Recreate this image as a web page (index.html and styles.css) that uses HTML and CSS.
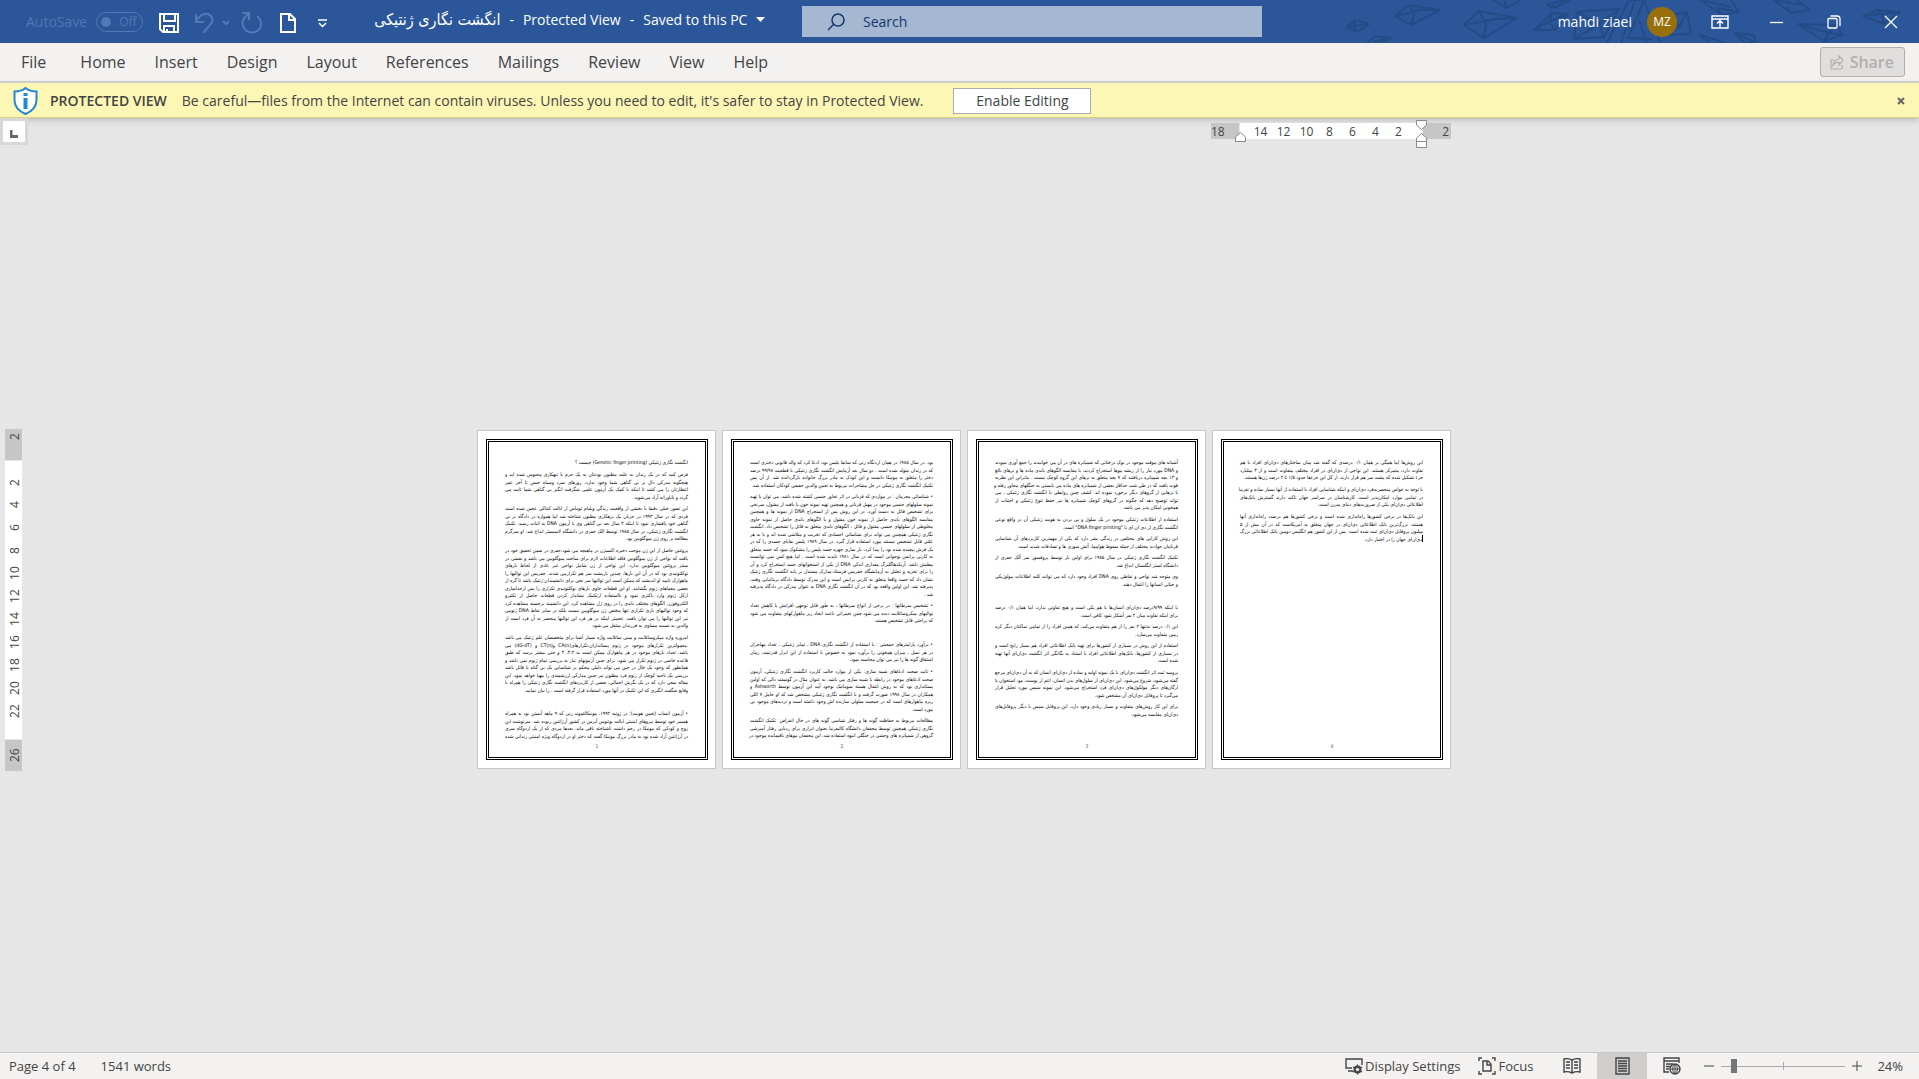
FILE: index.html
```html
<!DOCTYPE html>
<html lang="en">
<head>
<meta charset="utf-8">
<title>انگشت نگاری ژنتیکی - Protected View</title>
<link rel="stylesheet" href="styles.css">
</head>
<body>
<header class="titlebar">
  <svg class="titlebar-art" width="580" height="43" viewBox="0 0 580 43" aria-hidden="true">
    <g fill="none" stroke="#244b86" stroke-width="2" stroke-linejoin="round">
      <path d="M8 27l8-7 14 4-12 8zM8 27l22-3M16 20l-1 6 3 6"/>
      <path d="M56 16l14-11 31 5-29 15zM56 16l25-6 20 0M70 5l5 8-3 12"/>
      <path d="M28 43l8-7 16 2-10 5M34 42l18-4"/>
      <path d="M125 25l15-14 38 7-33 20zM125 25l32-6 21-1M140 11l7 13-2 14"/>
      <path d="M154 0l14 8 14-8M165 0l3 8M207 5l8 3 16-8M207 5l20-5M215 8l-2-5"/>
      <path d="M195 30l18-17 16 1-13 16zM195 30l16-9 18-7M213 13l-3 9 6 8"/>
      <path d="M235 39l3-27 42-3-15 28zM238 12l22 12 20-15M260 24l-25 15M265 37l-5-13"/>
      <path d="M268 43l22-43 15 0 16 43M282 43l14-43M305 0l-16 38 24 1M300 20l8 23"/>
      <path d="M322 35l10-20 16-3 4 22zM332 15l8 12-18 8M348 12l-8 15"/>
      <path d="M361 0l22 15 17-3-8-12M361 0l31 7M383 15l-5-7 22 4M359 34l27 9M359 34l12 9"/>
      <path d="M396 33l10 10 11 0-2-8zM396 33l21 10M435 0l17 13 19-3-14-10M435 0l27 5M452 13l-4-7"/>
      <path d="M459 24l38 1 7 10-19 6zM459 24l31 9 14 2M497 25l-7 8-5 8"/>
      <path d="M524 16l14-6 23 2-16 12zM524 16l19-2 18-2M538 10l5 6 2 8"/>
    </g>
  </svg>
  <div class="title-left">
    <label class="autosave">AutoSave
      <span class="toggle"><input type="checkbox" disabled><span>Off</span></span>
    </label>
    <button class="qat save" aria-label="Save"><svg width="20" height="20" viewBox="0 0 20 20"><path d="M1 1h18v18H4l-3-3zM5 1v7h11V1M5 19v-6h10v6M8 19v-3" fill="none" stroke="#fff" stroke-width="2"/></svg></button>
    <button class="qat undo" aria-label="Undo" disabled><svg width="34" height="22" viewBox="0 0 34 22"><path d="M1 2v8h8M1 9c4-6 8-8 12-7 5 2 6 7 2 11l-7 8M28 9l3 3 3-3" fill="none" stroke="#5079b5" stroke-width="2"/></svg></button>
    <button class="qat redo" aria-label="Repeat" disabled><svg width="22" height="22" viewBox="0 0 22 22"><path d="M1 1h7v7M8 2C2 5 0 11 3 16c4 6 12 6 16 0 2-4 1-9-3-12" fill="none" stroke="#5079b5" stroke-width="2"/></svg></button>
    <button class="qat new" aria-label="New document"><svg width="16" height="20" viewBox="0 0 16 20"><path d="M1 1h9l5 5v13H1zM9 1v6h6" fill="none" stroke="#fff" stroke-width="2"/></svg></button>
    <button class="qat more" aria-label="Customize Quick Access Toolbar"><svg width="9" height="9" viewBox="0 0 9 9"><path d="M0 1h9M1 4l3.500 3.500L8 4" fill="none" stroke="#fff" stroke-width="1.500"/></svg></button>
    <button class="doc-title"><bdi class="fa">انگشت نگاری ژنتیکی</bdi><span>-</span><span>Protected View</span><span>-</span><span>Saved to this PC</span><svg width="9" height="5" viewBox="0 0 9 5"><path d="M0 0h9L4.500 5z" fill="#fff"/></svg></button>
  </div>
  <label class="search">
    <svg width="18" height="18" viewBox="0 0 18 18"><circle cx="11" cy="7" r="6" fill="none" stroke="#12376c" stroke-width="1.500"/><path d="M7 11l-6 6" stroke="#12376c" stroke-width="1.500"/></svg>
    <input type="text" placeholder="Search" aria-label="Search">
  </label>
  <div class="title-right">
    <button class="user">mahdi ziaei <span class="avatar">MZ</span></button>
    <button class="win" aria-label="Ribbon Display Options"><svg width="18" height="14" viewBox="0 0 18 14"><path d="M1 1h16v12H1zM1 4h16M9 12V6M6 8.500l3-3 3 3" fill="none" stroke="#fff" stroke-width="1.400"/></svg></button>
    <button class="win" aria-label="Minimize"><svg width="14" height="14" viewBox="0 0 14 14"><path d="M0 7.500h13" stroke="#fff" stroke-width="1.300"/></svg></button>
    <button class="win" aria-label="Restore"><svg width="14" height="14" viewBox="0 0 14 14"><path d="M1 4.500q0-1 1-1h7q1 0 1 1v7.500q0 1-1 1H2q-1 0-1-1zM3.500 1H10q3 0 3 3v7" fill="none" stroke="#fff" stroke-width="1.300"/></svg></button>
    <button class="win" aria-label="Close"><svg width="14" height="14" viewBox="0 0 14 14"><path d="M1 1l12 12M13 1L1 13" stroke="#fff" stroke-width="1.300"/></svg></button>
  </div>
</header>

<nav class="tabs">
  <button class="file">File</button><button>Home</button><button>Insert</button><button>Design</button><button>Layout</button><button>References</button><button>Mailings</button><button>Review</button><button>View</button><button>Help</button>
  <button class="share" disabled><svg width="14" height="15" viewBox="0 0 14 15"><path d="M4 5H1v9h11v-4M3 10c1-4 3-6 6-6V1l4 4-4 5V7C6 7 5 8 3 10z" fill="none" stroke="#b1afad" stroke-width="1.200"/></svg>Share</button>
</nav>

<section class="message">
  <svg width="25" height="28" viewBox="0 0 25 28"><path d="M12.500 1c3 2.500 7 3.500 11 3.500V13c0 6-4 11-11 14C5.500 24 1.500 19 1.500 13V4.500c4 0 8-1 11-3.500z" fill="#fff" stroke="#2488cf" stroke-width="2"/><path d="M12.500 6v3M12.500 11v11" stroke="#2488cf" stroke-width="4"/></svg>
  <strong>PROTECTED VIEW</strong>
  <span class="message-text">Be careful—files from the Internet can contain viruses. Unless you need to edit, it's safer to stay in Protected View.</span>
  <button class="enable">Enable Editing</button>
  <button class="dismiss" aria-label="Close message"><svg width="8" height="8" viewBox="0 0 8 8"><path d="M1 1l6 6M7 1L1 7" stroke="#666" stroke-width="2"/></svg></button>
</section>

<main class="workspace">
  <button class="tab-stop" aria-label="Tab selector"><svg width="8" height="8" viewBox="0 0 8 8"><path d="M1 0v6.500h7" fill="none" stroke="#666" stroke-width="3"/></svg></button>
  <div class="hruler-row">
    <div class="hruler">
      <div class="edge">18</div>
      <div class="scale"><span>14</span><span>12</span><span>10</span><span>8</span><span>6</span><span>4</span><span>2</span></div>
      <div class="edge end">2</div>
      <svg class="marker left" width="11" height="10" viewBox="0 0 11 10"><path d="M.5 9.500V5l5-4.500 5 4.500v4.500z" fill="#fff" stroke="#888"/></svg>
      <svg class="marker right" width="11" height="28" viewBox="0 0 11 28"><path d="M.5.5h10V5l-5 4.500L.5 5zM.5 21.500V18l5-4.500 5 4.500v3.500zM.5 21.500h10v6H.5z" fill="#fff" stroke="#888"/></svg>
    </div>
  </div>
  <div class="vruler">
    <div class="edge">2</div>
    <div class="scale"><span>2</span><span>4</span><span>6</span><span>8</span><span>10</span><span>12</span><span>14</span><span>16</span><span>18</span><span>20</span><span>22</span></div>
    <div class="edge end">26</div>
  </div>
  <div class="pages" lang="fa" dir="rtl">
    <article class="page"><div class="frame">
      <p><span>انگشت نگاری ژنتیکی (Genetic finger printing) چیست ؟</span></p>
      <p><span>فرض کنید که در یک زندان به علت مظنون بودنتان به یک جرم یا تبهکاری محبوس شده اید و</span><span>هیچگونه مدرکی دال بر بی گناهی شما وجود ندارد، روزهای سرد وسیاه حبس تا آخر عمر</span><span>انتظارتان را می کشد تا اینکه با کمک یک آزمون علمی شگرفت انگیز بی گناهی شما ثابت می</span><span>گردد و ناباورانه آزاد می‌شوید.</span></p>
      <p><span>این تصور خیلی دقیقا با بخشی از واقعیت زندگی ویلیام توماس از ایالت کنتاکی عجین شده است</span><span>فردی که در سال ۱۹۹۳ در جریان یک بزهکاری مظنون شناخته شد اما همواره در دادگاه بر بی</span><span>گناهی خود پافشاری نمود تا اینکه ۴ سال بعد بی گناهی وی با آزمون DNA به اثبات رسید. تکنیک</span><span>انگشت نگاری ژنتیکی، در سال ۱۹۸۵ توسط الک جفری در دانشگاه لاسیستر ابداع شد. او سرگرم</span><span>مطالعه بر روی ژن میوگلوبین بود.</span></p>
      <p><span>پروتئین حاصل از این ژن موجب ذخیره اکسیژن در ماهیچه می شود.جفری در ضمن تحقیق خود در</span><span>یافت که نواحی از ژن میوگلوبین فاقد اطلاعات لازم برای ساخت میوگلوبین می باشد و نقشی در</span><span>سنتز پروتئین میوگلوبین ندارد. این نواحی از ژن شامل نواحی غیر عادی از لحاظ بازهای</span><span>نوکلئوتیدی بود که در آن این بازها، چندین بارپشت سر هم تکرارمی شدند. جفریس این توالیها را</span><span>ماهوارک نامید او اندیشید که ممکن است این توالیها سر نخی برای دانشمندان ژنتیک باشد تا گره از</span><span>بعضی معماهای ژنوم بگشایند. او این قطعات حاوی بازهای نوکلئوتیدی تکراری را پس ازجداسازی</span><span>ازکل ژنوم وارد باکتری نمود و بااستفاده ازتکنیک نشاندار کردن قطعات حاصل از تکثیرو</span><span>الکتروفورز، الگوهای مختلف باندی را در روی ژل مشاهده کرد. این دانشمند برجسته مشاهده کرد</span><span>که وجود توالیهای بازی تکراری تنها مختص ژن میوگلوبین نیست بلکه در سایر نقاط DNA ژنومی</span><span>نیز این توالیها را می توان یافت. عجیبتر اینکه در هر فرد این توالیها منحصر به آن فرد است از</span><span>والدین به نسبت مساوی به فرزندان منتقل می شود.</span></p>
      <p><span>امروزه واژه میکروساتلایت و مینی ساتلایت واژه بسیار آشنا برای متخصصان علم ژنتیک می باشد</span><span>.معمولترین تکرارهای موجود در ژنوم پستانداران،تکرارهای(CA(n و(CT(n و (dG-dT) می</span><span>باشد. تعداد بازهای موجود در هر ماهوارک ممکن است به ۳،۲، ۴ و حتی بیشتر برسد که طبق</span><span>قاعده خاصی در ژنوم تکرار می شود. برای چنین آزمونهای نیاز به بررسی تمام ژنوم نمی باشد و</span><span>همانطور که وجود یک خال در جین می تواند دلیلی محکم بر شناسایی یک بی گناه یا قاتل باشد</span><span>بررسی یک ناحیه کوچک از ژنوم فرد مظنون نیز چنین مدارکی ارزشمندی را مهیا خواهد نمود. این</span><span>مقاله سعی دارد که در یک نگرش اجمالی، بعضی از کاربردهای انگشت نگاری ژنتیکی را همراه با</span><span>وقایع شگفت انگیزی که این تکنیک در آنها مورد استفاده قرار گرفته است ، را بیان نمایید.</span></p>
      <p><span></span></p>
      <p><span>• آزمون انساب (تعیین هویت): در ژوئیه ۱۹۹۲، مونیکالئموند زنی که ۹ ماهه آبستن بود به همراه</span><span>همسر خود توسط نیروهای امنیتی ایالت بوئنوس آیرس در کشور آرژانتین ربوده شد. سرنوشت این</span><span>زوج و کودکی که مونیکا در رحم داشت ناشناخته باقی ماند. بعدها مردی که از یک اردوگاه سری</span><span class="full">در آرژانتین آزاد شده بود به مادر بزرگ مونیکا گفت که دختر او در اردوگاه ویژه امنیتی زندانی شده</span></p>
      <footer>1</footer>
    </div></article>
    <article class="page"><div class="frame">
      <p><span>بود. در سال ۱۹۸۵ در همان اردنگاه زنی که سابقا پلیس بود، ادعا کرد که والد قانونی دختری است</span><span>که در زندان متولد شده است . دو سال بعد آزمایش انگشت نگاری ژنتیکی با قطعیت ۹۹/۹۸ درصد</span><span>دختر را متعلق به مونیکا دانست و این کودک به مادر بزرگ خانواده بازگردانده شد. از آن پس</span><span>تکنیک انگشت نگاری ژنتیکی در حل مشاجرات مربوط به تعیین والدین حقیقی کودکان استفاده شد.</span></p>
      <p><span>• شناسائی مجرمان : در مواردی که قربانی در اثر تجاوز جنسی کشته شده باشد، می توان با تهیه</span><span>نمونه سلولهای جنسی موجود در مهبل قربانی و همچنین تهیه نمونه خون یا بافت از مقتول، سرنخی</span><span>برای تشخیص قاتل به دست آورد. در این روش پس از استخراج DNA از نمونه ها و همچنین</span><span>مقایسه الگوهای باندی حاصل از نمونه خون مقتول و یا الگوهای باندی حاصل از نمونه حاوی</span><span>مخلوطی از سلولهای جنسی مقتول و قاتل ، الگوهای باندی متعلق به قاتل را تشخیص داد. انگشت</span><span>نگاری ژنتیکی همچنین می تواند برای شناسائی اجسادی که تخریب و متلاشی شده اند و یا به هر</span><span>علتی قابل تشخیص نیستند مورد استفاده قرار گیرد. در سال ۱۹۸۹ پلیس بقایای جسدی را که در</span><span>یک فرش پیچیده شده بود را پیدا کرد، باز سازی چهره جسد پلیس را مشکوک نمود که جسد متعلق</span><span>به کارنی پرایس نوجوانی است که در سال ۱۹۸۱ ناپدید شده است . اما هیچ کس نمی توانست</span><span>مطمئن باشد. آریکدهاگلبرگ مقداری اندکی DNA از یکی از استخوانهای جسد استخراج کرد و آن</span><span>را برای تجزیه و تحلیل به آزمایشگاه جفریس فرستاد.مدارک مستدل بر پایه انگشت نگاری ژنتیک</span><span>نشان داد که جسد واقعا متعلق به کارنی پرایس است و این مدرک توسط دادگاه بریتانیایی وقت،</span><span>پذیرفته شد. این اولین واقعه بود که در آن انگشت نگاری DNA به عنوان مدرکی در دادگاه پذیرفته</span><span>شد .</span></p>
      <p><span>• تشخیص سرطانها : در برخی از انواع سرطانها ، به طور قابل توجهی افزایش یا کاهش تعداد</span><span>توالیهای میکروساتلایت دیده می شود.چنین تغییراتی باعث ایجاد ریز ماهوارکهای متفاوت می شود</span><span>که براحتی قابل تشخیص هستند.</span></p>
      <p><span></span></p>
      <p><span>• برآورد پارامترهای جمعیتی : با استفاده از انگشت نگاری DNA ، تمایز ژنتیکی ، تعداد مهاجران</span><span>در هر نسل ، میزان همخونی را برآورد نمود به خصوص با استفاده از این ابزار قدرتمند، زمان</span><span>اشتقاق گونه ها را نیز می توان محاسبه نمود.</span></p>
      <p><span>• تایید صحت ادعاهای شبیه سازی: یکی از موارد جالب کاربرد انگشت نگاری ژنتیکی، آزمون</span><span>صحت ادعاهای موجود در رابطه با شبیه سازی می باشد. به عنوان مثال در گوسفند دالی که اولین</span><span>پستانداری بود که به روش انتقال هسته سوماتیک بوجود آمد این آزمون توسط Ashworth و</span><span>همکاران در سال ۱۹۹۸ صورت گرفت و با انگشت نگاری ژنتیکی مشخص شد که او حامل ۷ اللی</span><span>ریزه ماهوارهای است که در جمعیت سلولی سازنده اش وجود داشته است و تردیدهای موجود بی</span><span>مورد است.</span></p>
      <p><span>مطالعات مربوط به حفاظت گونه ها و رفتار شناسی گونه های در حال انقراض: تکنیک انگشت</span><span>نگاری ژنتیکی همچنین توسط محققان دانشگاه کالیفرنیا بعنوان ابزاری برای ردیابی رفتار آمیزشی</span><span class="full">گروهی از شمپانزه های وحشی در جنگلی انبوه استفاده شد. این محققان موهای باقیمانده موجود در</span></p>
      <footer>2</footer>
    </div></article>
    <article class="page"><div class="frame">
      <p><span>آشیانه های موقت موجود در نوک درختانی که شمپانزه های در آن می خوابیدند را جمع آوری نمودند</span><span>و DNA مورد نیاز را از ریشه موها استخراج کردند، با مقایسه الگوهای باندی ماده ها و نرهای بالغ</span><span>و ۱۳ بچه شمپانزه دریافتند که ۷ بچه متعلق به نرهای این گروه کوچک نیست . بنابراین این نظریه</span><span>قوت یافت که در طی شب حداقل بعضی از شمپانزه های ماده می بایستی به جنگلهای مجاور رفته و</span><span>با نرهایی از گروهای دیگر برخورد نموده اند. کشف چنین روابطی با انگشت نگاری ژنتیکی ، می</span><span>تواند توضیح دهد که چگونه در گروهای کوچک شمپانزه ها نیز حفظ تنوع ژنتیکی و اجتناب از</span><span>همخونی امکان پذیر می باشد.</span></p>
      <p><span>استفاده از اطلاعات ژنتیکی موجود در یک سلول و پی بردن به هویت ژنتیکی آن در واقع نوعی</span><span>انگشت نگاری از دی ان ای یا "DNA finger printing" است.</span></p>
      <p><span>این روش کارایی های مختلفی در زندگی بشر دارد که یکی از مهمترین کاربردهای آن شناسایی</span><span>قربانیان حوادث مختلف از جمله سقوط هواپیما، آتش سوزی ها و تصادفات شدید است.</span></p>
      <p><span>تکنیک انگشت نگاری ژنتیکی در سال ۱۹۸۵ برای اولین بار توسط پروفسور سر آلک جفری از</span><span>دانشگاه لستر انگلستان ابداع شد.</span></p>
      <p><span>وی متوجه شد نواحی و نقاطی روی DNA افراد وجود دارد که می توانند کلیه اطلاعات بیولوژیکی</span><span>و حیاتی انسانها را انتقال دهند.</span></p>
      <p><span></span></p>
      <p><span>با اینکه ۹/۹۹درصد دی‌ان‌ای انسان‌ها با هم یکی است و هیچ تفاوتی ندارد، اما همان ۰/۱ درصد</span><span>برای اینکه تفاوت میان ۲ نفر آشکار شود کافی است.</span></p>
      <p><span>این ۰/۱ درصد نه‌تنها ۲ نفر را از هم متفاوت می‌کند، که همین افراد را از تمامی ساکنان دیگر کره</span><span>زمین متفاوت می‌سازد.</span></p>
      <p><span>استفاده از این روش در بسیاری از کشورها برای تهیه بانک اطلاعاتی افراد هم بسیار رایج است و</span><span>در بسیاری از کشورها، بانک‌های اطلاعاتی افراد با استناد به یگانگی اثر انگشت دی‌ان‌ای آنها تهیه</span><span>شده است.</span></p>
      <p><span>پروسه ثبت اثر انگشت دی‌ان‌ای با یک نمونه اولیه و ساده از دی‌ان‌ای انسان که به آن دی‌ان‌ای مرجع</span><span>گفته می‌شود، شروع می‌شود. این دی‌ان‌ای از سلول‌های بدن انسان، اعم از پوست، مو، استخوان یا</span><span>ارگان‌های دیگر مولکول‌های دی‌ان‌ای فرد استخراج می‌شود. این نمونه سپس مورد تحلیل قرار</span><span>می‌گیرد تا پروفایل دی‌ان‌ای آن مشخص شود.</span></p>
      <p><span>برای این کار روش‌های متفاوت و بسیار زیادی وجود دارد. این پروفایل سپس با دیگر پروفایل‌های</span><span>دی‌ان‌ای مقایسه می‌شود.</span></p>
      <footer>3</footer>
    </div></article>
    <article class="page"><div class="frame">
      <p><span>این روش‌ها اما همگی بر همان ۰/۱ درصدی که گفته شد میان ساختارهای دی‌ان‌ای افراد با هم</span><span>تفاوت دارد، متمرکز هستند. این نواحی از دی‌ان‌ای در افراد مختلف متفاوت است و از ۳ میلیارد</span><span>جزء تشکیل شده که پشت سر هم قرار دارند. از کل این جزءها حدود ۱/۵ تا ۲ درصد ژن‌ها هستند.</span></p>
      <p><span>با توجه به خواص منحصربه‌فرد دی‌ان‌ای و اینکه شناسایی افراد با استفاده از آنها بسیار ساده و تقریبا</span><span>در تمامی موارد امکان‌پذیر است، کارشناسان در سراسر جهان تاکید دارند گسترش بانک‌های</span><span>اطلاعاتی دی‌ان‌ای یکی از ضرورت‌های دنیای مدرن است.</span></p>
      <p><span>این بانک‌ها در برخی کشورها راه‌اندازی شده است و برخی کشورها هم درصدد راه‌اندازی آنها</span><span>هستند. بزرگ‌ترین بانک اطلاعاتی دی‌ان‌ای در جهان متعلق به آمریکاست که در آن بیش از ۵</span><span>میلیون پروفایل دی‌ان‌ای ثبت شده است. پس از این کشور هم انگلیس دومین بانک اطلاعاتی بزرگ</span><span class="caret">دی‌ان‌ای جهان را در اختیار دارد.</span></p>
      <footer>4</footer>
    </div></article>
  </div>
</main>

<footer class="status">
  <button class="page-count">Page 4 of 4</button>
  <button class="words">1541 words</button>
  <button class="display"><svg width="18" height="18" viewBox="0 0 18 18"><path d="M7 11H1V2h16v6M3 14h5" fill="none" stroke="#444" stroke-width="1.400"/><circle cx="12.500" cy="12.500" r="3" fill="none" stroke="#444" stroke-width="2"/><path d="M12.500 7.500v10M8 10l9 5M17 10l-9 5" stroke="#444" stroke-width="1.400"/><circle cx="12.500" cy="12.500" r="1.500" fill="#f3f2f1"/></svg>Display Settings</button>
  <button class="focus"><svg width="18" height="18" viewBox="0 0 18 18"><path d="M4 1H1v3M14 1h3v3M4 17H1v-3M14 17h3v-3M5 4h5l3 3v7H5zM9 4v4h4" fill="none" stroke="#444" stroke-width="1.400"/></svg>Focus</button>
  <button class="view" aria-label="Read Mode"><svg width="18" height="16" viewBox="0 0 18 16"><path d="M9 2Q5 0 1 1v13q4-1 8 1 4-2 8-1V1q-4-1-8 1zM9 2v13M3 4h4M3 7h4M3 10h4M11 4h4M11 7h4M11 10h4" fill="none" stroke="#444" stroke-width="1.400"/></svg></button>
  <button class="view active" aria-label="Print Layout"><svg width="15" height="18" viewBox="0 0 15 18"><path d="M1 1h13v16H1zM3 4h9M3 6.500h9M3 9h9M3 11.500h9M3 14h9" fill="none" stroke="#444" stroke-width="1.400"/></svg></button>
  <button class="view" aria-label="Web Layout"><svg width="18" height="18" viewBox="0 0 18 18"><path d="M6 15H1V1h15v5M1 4h15M3 7h7M3 9.500h4M3 12h3" fill="none" stroke="#444" stroke-width="1.400"/><circle cx="12" cy="12" r="5" fill="#f3f2f1" stroke="#444" stroke-width="1.400"/><path d="M7 12h10M12 7v10M12 7q-5 5 0 10M12 7q5 5 0 10" fill="none" stroke="#444"/></svg></button>
  <button class="zoom-step" aria-label="Zoom out"><svg width="10" height="10" viewBox="0 0 10 10"><path d="M0 5h10" stroke="#444"/></svg></button>
  <input class="zoom" type="range" min="0" max="100" value="8" aria-label="Zoom">
  <button class="zoom-step" aria-label="Zoom in"><svg width="10" height="10" viewBox="0 0 10 10"><path d="M0 5h10M5 0v10" stroke="#444"/></svg></button>
  <button class="zoom-level">24%</button>
</footer>
</body>
</html>
```
FILE: styles.css
```css
* { box-sizing: border-box; }

body {
  margin: 0;
  min-height: 100vh;
  display: grid;
  grid-template-rows: 43px 40px 35px 1fr 27px;
  background: #e6e6e6;
  color: #444;
  font: 14px/20px "Open Sans", "Noto Sans", "DejaVu Sans", sans-serif;
}

button, input {
  font: inherit;
  color: inherit;
  background: none;
  border: 0;
  padding: 0;
  margin: 0;
}

svg { display: block; flex: none; }

button { white-space: nowrap; }

/* Title bar */
.titlebar {
  position: relative;
  display: grid;
  grid-template-columns: minmax(0, 802fr) minmax(0, 460fr) minmax(0, 657fr);
  align-items: center;
  background: #2b579a;
  color: #fff;
}

.titlebar-art { position: absolute; right: 0; top: 0; }

.title-left { display: flex; align-items: center; padding-left: 26px; }

.autosave { display: flex; align-items: center; gap: 9px; color: #5079b5; height: 20px; }

.toggle {
  display: flex;
  align-items: center;
  gap: 8px;
  width: 47px;
  height: 20px;
  padding-left: 4px;
  border: 1px solid #5079b5;
  border-radius: 10px;
  font-size: 12px;
}

.toggle input {
  appearance: none;
  flex: none;
  width: 10px;
  height: 10px;
  border-radius: 50%;
  background: #5079b5;
}

.qat { padding-top: 3px; }
.save { margin-left: 16px; }
.undo { margin-left: 16px; }
.redo { margin-left: 12px; }
.new { margin-left: 17px; }
.more { margin-left: 22px; }

.doc-title { display: flex; align-items: center; gap: 9px; margin-left: 47px; padding-bottom: 4px; }
.fa { font-family: "DejaVu Sans Condensed", "DejaVu Sans", sans-serif; font-size: 16px; }

.search {
  display: flex;
  align-items: center;
  gap: 18px;
  height: 31px;
  padding-left: 25px;
  background: #a6b8d1;
  color: #12376c;
}

.search input { flex: 1; min-width: 0; }
.search input::placeholder { color: #12376c; opacity: 1; }

.title-right {
  position: relative;
  display: flex;
  align-items: center;
  justify-content: flex-end;
}

.user { display: flex; align-items: center; gap: 15px; margin-right: 14px; }

.avatar {
  width: 30px;
  height: 30px;
  border-radius: 50%;
  background: #986f0b;
  font-size: 12px;
  line-height: 30px;
}

.win { width: 57px; height: 43px; display: grid; place-items: center; }

/* Ribbon tabs */
.tabs {
  display: flex;
  align-items: center;
  gap: 29px;
  padding: 0 14px 0 21px;
  background: #f3f2f1;
  border-bottom: 2px solid #d2d0ce;
  font-size: 16px;
}

.file { margin-right: 5px; }

.share {
  display: flex;
  align-items: center;
  gap: 6px;
  height: 30px;
  margin-left: auto;
  padding: 0 10px 0 9px;
  border: 1px solid #b1afad;
  border-radius: 3px;
  background: #e1dfdd;
  color: #b1afad;
  font-weight: 600;
}

/* Protected view message */
.message {
  display: flex;
  align-items: center;
  padding: 1px 14px 0 13px;
  background: #fdf7b6;
  border-bottom: 1px solid #d8d283;
  box-shadow: 0 2px 6px #bbb;
}

.message strong { margin-left: 12px; font-weight: 600; }
.message-text { margin-left: 15px; }

.enable {
  width: 138px;
  height: 26px;
  margin-left: 30px;
  background: #fff;
  border: 1px solid #ababab;
}

.dismiss { margin-left: auto; }

/* Workspace */
.workspace {
  display: grid;
  grid-template-columns: 28px 1fr;
  grid-template-rows: 29px 1fr;
  padding-right: 19px;
}

.tab-stop {
  display: grid;
  place-items: center;
  width: 28px;
  height: 27px;
  padding-top: 4px;
  background: #fff;
  border: 3px solid #d8d8d8;
}

.hruler-row { justify-self: center; display: flex; justify-content: flex-end; width: 974px; padding-top: 5px; }

.hruler, .vruler { font-size: 12px; line-height: 18px; }

.hruler { position: relative; display: flex; gap: 1px; width: 240px; height: 16px; }
.edge { background: #c6c6c6; flex: none; }
.hruler .edge { width: 28px; }
.hruler .end { text-align: right; padding-right: 2px; }
.scale { flex: 1; display: flex; background: #fff; }
.scale span { flex: 1; text-align: center; }
.hruler .scale { padding: 0 12px 0 9px; }

.marker { position: absolute; }
.marker.left { left: 24px; top: 9px; }
.marker.right { right: 24px; top: -3px; }

.vruler {
  align-self: center;
  display: flex;
  flex-direction: column;
  gap: 1px;
  width: 17px;
  height: 342px;
  margin-left: 5px;
  text-align: center;
}

.vruler .edge, .vruler span { writing-mode: vertical-rl; transform: rotate(180deg); line-height: 19px; }
.vruler .edge { height: 31px; text-align: right; padding-bottom: 4px; }
.vruler .end { text-align: center; padding: 0; }
.vruler .scale { flex-direction: column; padding: 10px 0 16px; }

.pages { display: flex; direction: ltr; gap: 6px; align-self: center; justify-self: center; }

.page {
  width: 239px;
  height: 339px;
  padding: 8px 7px 8px 8px;
  background: #fff;
  border: 1px solid #c6c6c6;
}

.frame {
  position: relative;
  display: flex;
  flex-direction: column;
  gap: 4px;
  height: 100%;
  padding: 16px 17px 16px 16px;
  border: 3px double #000;
  direction: rtl;
  font: 5px/8px "DejaVu Sans Condensed", "DejaVu Sans", sans-serif;
  color: #000;
}

.frame p { margin: 0; }
.frame span { display: block; height: 7px; white-space: nowrap; text-align-last: justify; }
.frame span:nth-child(odd) { height: 8px; }
.frame span:last-child { text-align-last: start; }
.frame .full:last-child { text-align-last: justify; }
.caret { border-right: 1px solid #000; }
.frame footer { position: absolute; left: 0; right: 0; bottom: 7px; text-align: center; color: #666; }

/* Status bar */
.status {
  display: flex;
  align-items: center;
  padding: 0 16px 0 9px;
  background: #f3f2f1;
  border-top: 1px solid #c8c6c4;
  font-size: 13px;
}

.words { margin-left: 25px; }
.display, .focus { display: flex; align-items: center; gap: 2px; }
.display { margin-left: auto; }
.focus { margin-left: 18px; margin-right: 14px; }
.view { display: grid; place-items: center; width: 50px; height: 26px; }
.active { background: #d0cecd; }
.zoom-step { margin: 0 7px; }

.zoom {
  appearance: none;
  width: 124px;
  height: 14px;
  background:
    linear-gradient(#ababab, #ababab) center / 100% 1px no-repeat,
    linear-gradient(#ababab, #ababab) center / 1px 8px no-repeat;
}

.zoom::-webkit-slider-thumb { appearance: none; width: 6px; height: 14px; background: #777; }
.zoom-level { margin-left: 8px; }
```
